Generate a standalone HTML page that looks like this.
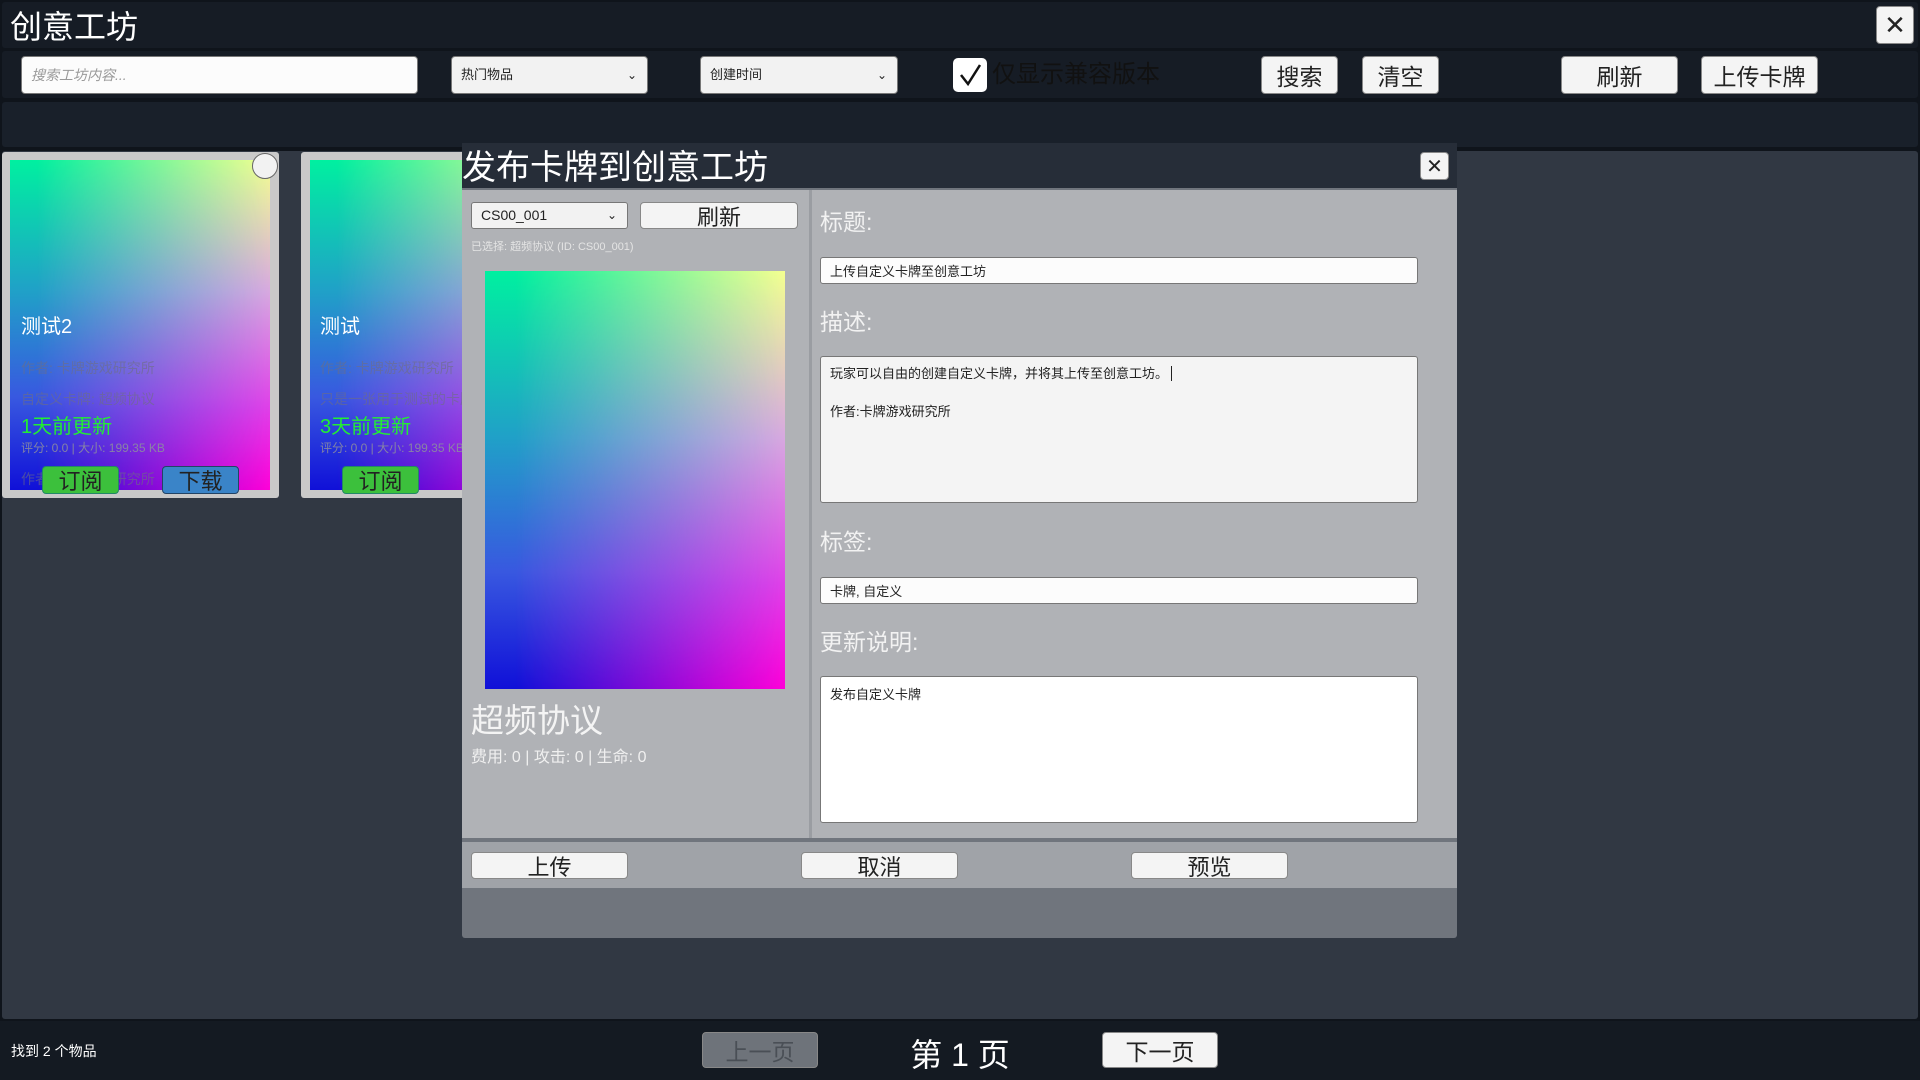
<!DOCTYPE html>
<html><head><meta charset="utf-8">
<style>
*{box-sizing:border-box;margin:0;padding:0}
body{width:1920px;height:1080px;background:#0f141b;position:relative;overflow:hidden;font-family:"Liberation Sans","Noto Sans CJK SC",sans-serif}
.a{position:absolute}
.btn{position:absolute;background:#f4f4f4;border:1px solid #888;border-radius:4px;color:#222;display:flex;align-items:center;justify-content:center;white-space:nowrap}
.grad{position:absolute;background:linear-gradient(to bottom,#00f0a0,#20a0c8 40%,#3858e0 72%,#1010d8)}
.grad::after{content:"";position:absolute;inset:0;background:linear-gradient(to bottom,#f4ff90,#d8a8e0 40%,#e040e8 75%,#ff00d8);-webkit-mask-image:linear-gradient(to right,transparent 10%,#000);mask-image:linear-gradient(to right,transparent 10%,#000)}
.lbl{position:absolute;color:#f2f2f2;font-size:23px}
.inp{position:absolute;background:#fcfcfc;border:1px solid #777;border-radius:3px;font-size:13px;color:#222;padding-left:9px}
</style></head><body>
<div class="a" style="left:2px;top:2px;width:1916px;height:46px;background:#161c25;border-radius:3px"></div>
<div class="a" style="left:10px;top:5px;color:#fff;font-size:32px;line-height:44px">创意工坊</div>
<div class="btn" style="left:1876px;top:6px;width:38px;height:38px;font-size:26px;border-radius:4px">✕</div>
<div class="a" style="left:2px;top:51px;width:1916px;height:47px;background:#161c25;border-radius:3px"></div>
<div class="inp" style="left:21px;top:56px;width:397px;height:38px;border-radius:4px;color:#999;font-style:italic;line-height:36px;font-size:14px">搜索工坊内容...</div>
<div class="inp" style="left:451px;top:56px;width:197px;height:38px;border-radius:4px;background:#f2f2f2;line-height:36px;font-size:13px">热门物品<span style="position:absolute;right:10px;font-size:12px">⌄</span></div>
<div class="inp" style="left:700px;top:56px;width:198px;height:38px;border-radius:4px;background:#f2f2f2;line-height:36px;font-size:13px">创建时间<span style="position:absolute;right:10px;font-size:12px">⌄</span></div>
<div class="a" style="left:953px;top:58px;width:34px;height:34px;background:#fff;border-radius:5px"><svg width="34" height="34"><path d="M8 17 L15 26 L27 7" stroke="#111" stroke-width="2.5" fill="none"/></svg></div>
<div class="a" style="left:992px;top:58px;color:#111;font-size:24px;line-height:34px">仅显示兼容版本</div>
<div class="btn" style="left:1261px;top:56px;width:77px;height:38px;font-size:23px">搜索</div>
<div class="btn" style="left:1362px;top:56px;width:77px;height:38px;font-size:23px">清空</div>
<div class="btn" style="left:1561px;top:56px;width:117px;height:38px;font-size:23px">刷新</div>
<div class="btn" style="left:1701px;top:56px;width:117px;height:38px;font-size:23px">上传卡牌</div>
<div class="a" style="left:2px;top:102px;width:1916px;height:45px;background:#19202a;border-radius:3px"></div>
<div class="a" style="left:2px;top:151px;width:1916px;height:868px;background:#313843;border-radius:3px"></div>
<div class="a" style="left:2px;top:152px;width:277px;height:346px;background:#c9c9c9;border-radius:3px"></div>
<div class="grad" style="left:10px;top:160px;width:260px;height:330px"></div>
<div class="a" style="left:252px;top:153px;width:26px;height:26px;border-radius:50%;background:#f2f2f2;border:1px solid #666"></div>
<div class="a" style="left:21px;top:310px;color:#fff;font-size:20px">测试2</div>
<div class="a" style="left:21px;top:358px;color:rgba(110,110,130,.6);font-size:14px">作者: 卡牌游戏研究所</div>
<div class="a" style="left:21px;top:389px;color:rgba(110,110,130,.6);font-size:14px">自定义卡牌: 超频协议</div>
<div class="a" style="left:21px;top:410px;color:#22ee33;font-size:20px">1天前更新</div>
<div class="a" style="left:21px;top:439px;color:rgba(140,140,160,.9);font-size:12px">评分: 0.0 | 大小: 199.35 KB</div>
<div class="a" style="left:21px;top:469px;color:rgba(110,110,130,.6);font-size:14px">作者: 卡牌游戏研究所</div>
<div class="btn" style="left:42px;top:466px;width:77px;height:28px;background:#3cc03c;border-color:#286;font-size:22px">订阅</div>
<div class="btn" style="left:162px;top:466px;width:77px;height:28px;background:#3a84c8;border-color:#246;font-size:22px">下载</div>
<div class="a" style="left:301px;top:152px;width:200px;height:346px;background:#c9c9c9;border-radius:3px"></div>
<div class="grad" style="left:310px;top:160px;width:260px;height:330px"></div>
<div class="a" style="left:320px;top:310px;color:#fff;font-size:20px">测试</div>
<div class="a" style="left:320px;top:358px;color:rgba(110,110,130,.6);font-size:14px;white-space:nowrap">作者: 卡牌游戏研究所</div>
<div class="a" style="left:320px;top:389px;color:rgba(110,110,130,.6);font-size:14px;white-space:nowrap">只是一张用于测试的卡牌</div>
<div class="a" style="left:320px;top:410px;color:#22ee33;font-size:20px;white-space:nowrap">3天前更新</div>
<div class="a" style="left:320px;top:439px;color:rgba(140,140,160,.9);font-size:12px;white-space:nowrap">评分: 0.0 | 大小: 199.35 KB</div>
<div class="btn" style="left:342px;top:466px;width:77px;height:28px;background:#3cc03c;border-color:#286;font-size:22px">订阅</div>
<div class="a" style="left:462px;top:143px;width:995px;height:795px;background:#70757d;border-radius:3px"></div>
<div class="a" style="left:462px;top:143px;width:995px;height:45px;background:#262d38"></div>
<div class="a" style="left:462px;top:147px;color:#fff;font-size:34px;line-height:42px">发布卡牌到创意工坊</div>
<div class="btn" style="left:1420px;top:152px;width:29px;height:28px;font-size:20px">✕</div>
<div class="a" style="left:462px;top:190px;width:347px;height:648px;background:#b0b2b6"></div>
<div class="a" style="left:812px;top:190px;width:645px;height:648px;background:#b0b2b6"></div>
<div class="a" style="left:809px;top:190px;width:3px;height:648px;background:#9a9da2"></div>
<div class="inp" style="left:471px;top:202px;width:157px;height:27px;background:#f2f2f2;line-height:25px;font-size:14px">CS00_001<span style="position:absolute;right:10px;font-size:12px">⌄</span></div>
<div class="btn" style="left:640px;top:202px;width:158px;height:27px;font-size:22px">刷新</div>
<div class="a" style="left:471px;top:238px;color:#e4e4e4;font-size:11px">已选择: 超频协议 (ID: CS00_001)</div>
<div class="grad" style="left:485px;top:271px;width:300px;height:418px"></div>
<div class="a" style="left:471px;top:694px;color:#f4f4f4;font-size:33px">超频协议</div>
<div class="a" style="left:471px;top:743px;color:#f0f0f0;font-size:16px">费用: 0 | 攻击: 0 | 生命: 0</div>
<div class="lbl" style="left:820px;top:203px">标题:</div>
<div class="inp" style="left:820px;top:257px;width:598px;height:27px;line-height:27px">上传自定义卡牌至创意工坊</div>
<div class="lbl" style="left:820px;top:303px">描述:</div>
<div class="inp" style="left:820px;top:356px;width:598px;height:147px;background:#f4f4f4;padding-top:7px;line-height:19px">玩家可以自由的创建自定义卡牌，并将其上传至创意工坊。<span style="border-left:1px solid #222;margin-left:3px"></span><br><br>作者:卡牌游戏研究所</div>
<div class="lbl" style="left:820px;top:523px">标签:</div>
<div class="inp" style="left:820px;top:577px;width:598px;height:27px;line-height:27px">卡牌, 自定义</div>
<div class="lbl" style="left:820px;top:623px">更新说明:</div>
<div class="inp" style="left:820px;top:676px;width:598px;height:147px;background:#fff;padding-top:7px">发布自定义卡牌</div>
<div class="a" style="left:462px;top:842px;width:995px;height:46px;background:#a0a3a8"></div>
<div class="btn" style="left:471px;top:852px;width:157px;height:27px;font-size:22px">上传</div>
<div class="btn" style="left:801px;top:852px;width:157px;height:27px;font-size:22px">取消</div>
<div class="btn" style="left:1131px;top:852px;width:157px;height:27px;font-size:22px">预览</div>
<div class="a" style="left:0;top:1021px;width:1920px;height:59px;background:#141a22"></div>
<div class="a" style="left:11px;top:1041px;color:#fff;font-size:14px">找到 2 个物品</div>
<div class="btn" style="left:702px;top:1032px;width:116px;height:36px;background:#6e737a;color:#4a4f56;font-size:23px">上一页</div>
<div class="a" style="left:900px;top:1030px;width:120px;text-align:center;color:#fff;font-size:32px">第 1 页</div>
<div class="btn" style="left:1102px;top:1032px;width:116px;height:36px;font-size:23px">下一页</div>
</body></html>
